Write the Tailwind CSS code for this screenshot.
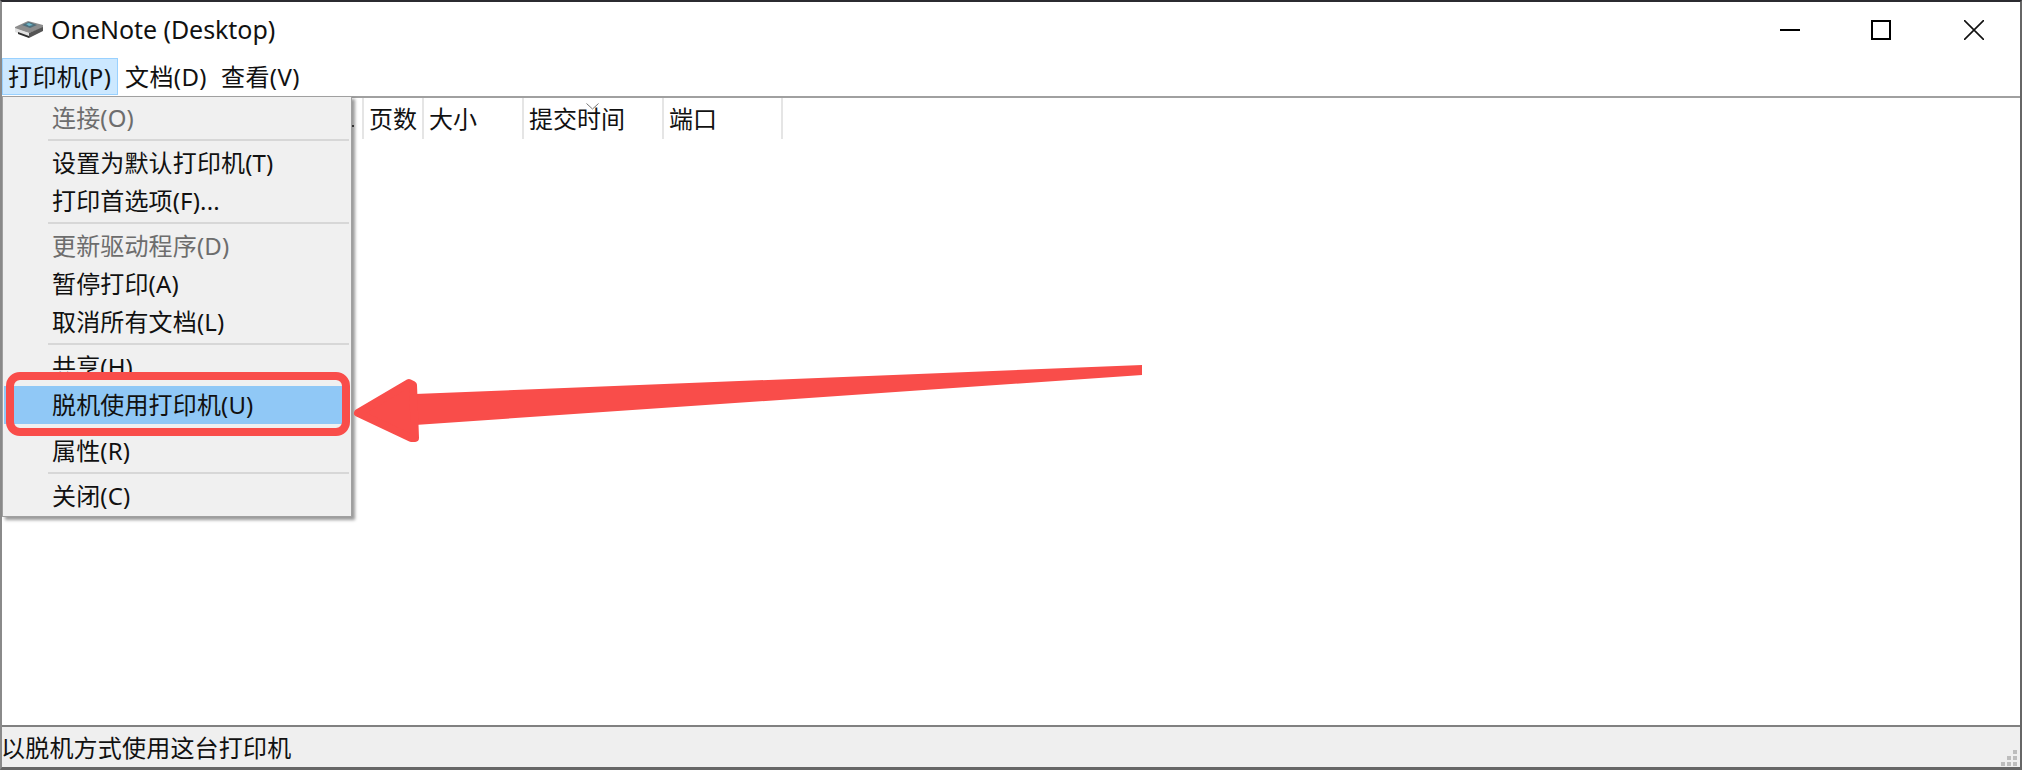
<!DOCTYPE html>
<html lang="zh-CN">
<head>
    <meta charset="UTF-8">
    <title>OneNote (Desktop)</title>
    <script src="https://cdn.jsdelivr.net/npm/@tailwindcss/browser@4"></script>
</head>
<body class="bg-white overflow-hidden font-['Noto_Sans','Noto_Sans_CJK_SC',sans-serif] text-[24px] leading-[38px] text-[#111]">
    <div class="relative w-[2022px] h-[770px] flex flex-col border-t-2 border-t-[#2b2b30] border-l-2 border-l-[#8a8a8a] border-r-2 border-r-[#666] border-b-[3px] border-b-[#666]">

        <!-- title bar -->
        <div class="h-[56px] flex items-center shrink-0">
            <svg class="ml-[13px] mb-[2px] w-[28px] h-[18px]" viewBox="0 0 28 18">
                <polygon points="0,7 13,1 28,5 28,8 14,13 0,9" fill="#8d8d8d"/>
                <polygon points="7,5 14,2 22,5 15,8" fill="#4f6f7c"/>
                <polygon points="11,4 14,3 18,5 14,6" fill="#6fb7c9"/>
                <polygon points="0,8 14,13 14,18 0,12" fill="#e2e2e2"/>
                <polygon points="14,13 28,7 28,11 14,18" fill="#555555"/>
                <polygon points="3,12 14,16 14,18 3,14" fill="#2e2e2e"/>
            </svg>
            <span class="ml-[8px] mb-[2px] text-[25px] tracking-[-0.05px]">OneNote (Desktop)</span>
            <div class="ml-auto flex items-center">
                <div class="w-[20px] h-[2px] bg-black mr-[71px]"></div>
                <div class="w-[20px] h-[20px] border-2 border-black mr-[73px]"></div>
                <svg class="w-[20px] h-[20px] mr-[36px]" viewBox="0 0 20 20">
                    <path d="M0 0L20 20M20 0L0 20" stroke="#111" stroke-width="1.6"/>
                </svg>
            </div>
        </div>

        <!-- menu bar -->
        <div class="h-[38px] flex shrink-0 border-b-2 border-b-[#a0a0a0] box-content tracking-[0.4px]">
            <div class="w-[116px] h-[37px] pl-[5px] bg-[#cce8ff] border border-[#99d1ff] leading-[35px]">打印机(P)</div>
            <div class="ml-[7px] w-[96px]">文档(D)</div>
            <div>查看(V)</div>
        </div>

        <!-- job list -->
        <div class="flex-1">
            <div class="flex h-[41px] pl-[360px] leading-[42px]">
                <div class="w-[60px] pl-[5px] border-l-2 border-l-[#e5e5e5]">页数</div>
                <div class="w-[100px] pl-[5px] border-l-2 border-l-[#e5e5e5]">大小</div>
                <div class="relative w-[140px] pl-[5px] border-l-2 border-l-[#e5e5e5]">
                    提交时间
                    <svg class="absolute left-[62px] top-[5px] w-[13px] h-[7px]" viewBox="0 0 13 7">
                        <path d="M0.500 0.500L6.500 6L12.500 0.500" fill="none" stroke="#777" stroke-width="1"/>
                    </svg>
                </div>
                <div class="w-[121px] pl-[5px] border-x-2 border-x-[#e5e5e5]">端口</div>
            </div>
        </div>

        <!-- status bar -->
        <div class="relative h-[42px] shrink-0 bg-[#efefef] border-t-2 border-t-[#808080] leading-[41px] tracking-[0.2px]">
            <span class="-ml-[1px]">以脱机方式使用这台打印机</span>
            <svg class="absolute right-[3px] bottom-[1px] w-[16px] h-[16px]" viewBox="0 0 16 16" fill="#bdbdbd">
                <rect x="12" y="0" width="4" height="4"/>
                <rect x="6" y="6" width="4" height="4"/>
                <rect x="12" y="6" width="4" height="4"/>
                <rect x="0" y="12" width="4" height="4"/>
                <rect x="6" y="12" width="4" height="4"/>
                <rect x="12" y="12" width="4" height="4"/>
            </svg>
        </div>

        <!-- printer menu -->
        <div class="absolute left-0 top-[94px] w-[350px] h-[421px] bg-[#f0f0f0] border border-[#a0a0a0] shadow-[3px_3px_3px_rgba(0,0,0,0.4)] pt-[2px] tracking-[0.15px]">
            <div class="pl-[49px] h-[38px] text-[#6d6d6d]">连接(O)</div>
            <div class="ml-[45px] mr-[2px] mt-[2px] mb-[3px] h-[2px] bg-[#d7d7d7]"></div>
            <div class="pl-[49px] h-[38px]">设置为默认打印机(T)</div>
            <div class="pl-[49px] h-[38px]">打印首选项(F)...</div>
            <div class="ml-[45px] mr-[2px] mt-[2px] mb-[3px] h-[2px] bg-[#d7d7d7]"></div>
            <div class="pl-[49px] h-[38px] text-[#6d6d6d]">更新驱动程序(D)</div>
            <div class="pl-[49px] h-[38px]">暂停打印(A)</div>
            <div class="pl-[49px] h-[38px]">取消所有文档(L)</div>
            <div class="ml-[45px] mr-[2px] mt-[2px] mb-[3px] h-[2px] bg-[#d7d7d7]"></div>
            <div class="pl-[49px] h-[38px]">共享(H)</div>
            <div class="pl-[48px] ml-[1px] mr-[9px] mb-[8px] h-[38px] bg-[#90c8f6]">脱机使用打印机(U)</div>
            <div class="pl-[49px] h-[38px]">属性(R)</div>
            <div class="ml-[45px] mr-[2px] mt-[2px] mb-[3px] h-[2px] bg-[#d7d7d7]"></div>
            <div class="pl-[49px] h-[38px]">关闭(C)</div>
        </div>

        <!-- ellipsis of the column hidden behind the menu -->
        <div class="absolute left-[350px] top-[123px] w-[2px] h-[2px] bg-[#333]"></div>

        <!-- red annotation -->
        <div class="absolute left-[4px] top-[370px] w-[344px] h-[64px] border-[8px] border-[#f94d4a] rounded-[14px]"></div>
        <svg class="absolute left-0 top-0 w-[2018px] h-[765px] pointer-events-none" viewBox="2 2 2018 765">
            <polygon points="1142,365 1142,375 415,425 415,394" fill="#f94d4a"/>
            <polygon points="358,413 409,383 413,385 415,438 411,438" fill="#f94d4a" stroke="#f94d4a" stroke-width="8" stroke-linejoin="round"/>
        </svg>
    </div>
</body>
</html>
